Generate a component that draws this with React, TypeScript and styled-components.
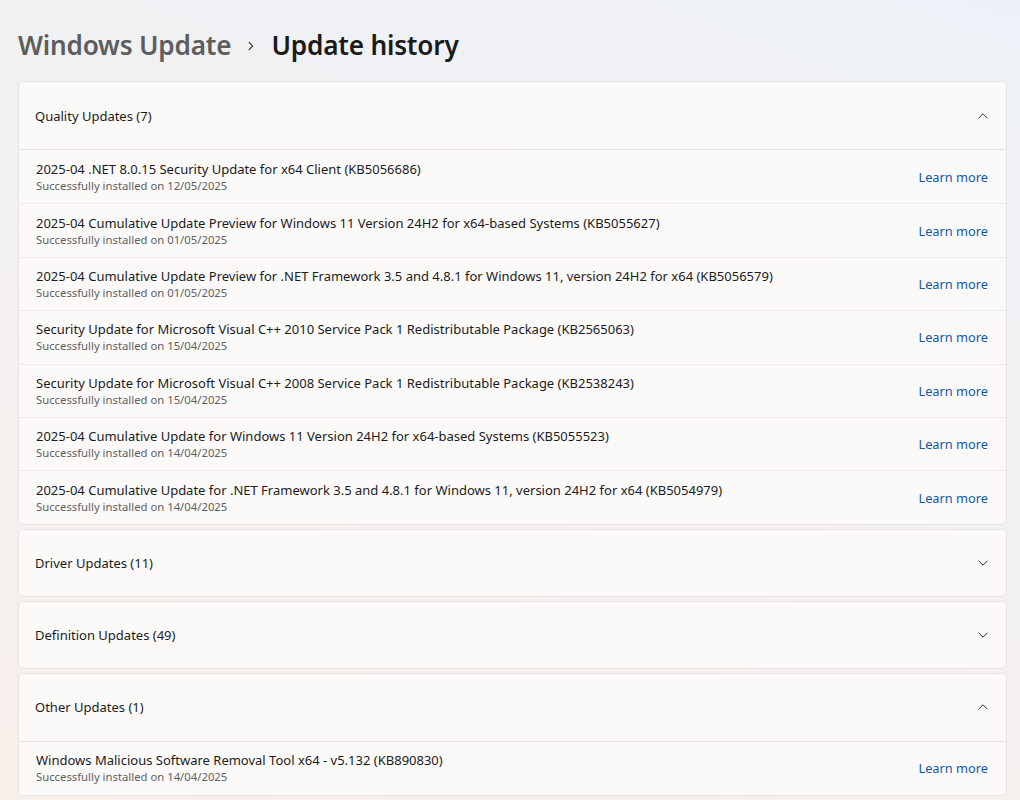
import styled, { createGlobalStyle } from 'styled-components';

interface UpdateItem {
  title: string;
  date: string;
}

interface UpdateGroup {
  name: string;
  count: number;
  open: boolean;
  items: UpdateItem[];
}

const groups: UpdateGroup[] = [
  {
    name: 'Quality Updates',
    count: 7,
    open: true,
    items: [
      { title: '2025-04 .NET 8.0.15 Security Update for x64 Client (KB5056686)', date: '12/05/2025' },
      { title: '2025-04 Cumulative Update Preview for Windows 11 Version 24H2 for x64-based Systems (KB5055627)', date: '01/05/2025' },
      { title: '2025-04 Cumulative Update Preview for .NET Framework 3.5 and 4.8.1 for Windows 11, version 24H2 for x64 (KB5056579)', date: '01/05/2025' },
      { title: 'Security Update for Microsoft Visual C++ 2010 Service Pack 1 Redistributable Package (KB2565063)', date: '15/04/2025' },
      { title: 'Security Update for Microsoft Visual C++ 2008 Service Pack 1 Redistributable Package (KB2538243)', date: '15/04/2025' },
      { title: '2025-04 Cumulative Update for Windows 11 Version 24H2 for x64-based Systems (KB5055523)', date: '14/04/2025' },
      { title: '2025-04 Cumulative Update for .NET Framework 3.5 and 4.8.1 for Windows 11, version 24H2 for x64 (KB5054979)', date: '14/04/2025' },
    ],
  },
  { name: 'Driver Updates', count: 11, open: false, items: [] },
  { name: 'Definition Updates', count: 49, open: false, items: [] },
  {
    name: 'Other Updates',
    count: 1,
    open: true,
    items: [
      { title: 'Windows Malicious Software Removal Tool x64 - v5.132 (KB890830)', date: '14/04/2025' },
    ],
  },
];

const GlobalStyle = createGlobalStyle`
  html, body {
    margin: 0;
    padding: 0;
  }
  body {
    font-family: "Noto Sans", "Open Sans", sans-serif;
    color: #1b1b1b;
    background: linear-gradient(200deg, #edf1f7 0%, #f2f1f1 45%, #f7efea 100%);
    min-height: 800px;
    overflow: hidden;
  }
`;

const Page = styled.div`
  padding: 27px 13px 0 18px;
  height: 800px;
  box-sizing: border-box;
`;

const Breadcrumb = styled.h1`
  margin: 0 0 17px 0;
  display: flex;
  align-items: center;
  gap: 15px;
  font-size: 26.2px;
  font-weight: 600;
  line-height: 37px;
  letter-spacing: -0.2px;
`;

const Crumb = styled.span<{ $current?: boolean }>`
  color: ${(p) => (p.$current ? '#1a1a1a' : '#5d5d5d')};
`;

const Separator = styled.span`
  display: flex;
  align-items: center;
`;

const Groups = styled.div`
  display: flex;
  flex-direction: column;
  gap: 4px;
`;

const Card = styled.section`
  background: rgba(252, 251, 250, 0.92);
  border: 1px solid #e6e3e1;
  border-radius: 5px;
  overflow: hidden;
`;

const Header = styled.div<{ $open: boolean }>`
  height: ${(p) => (p.$open ? '67px' : '66px')};
  display: flex;
  align-items: center;
  justify-content: space-between;
  padding: 0 17px 0 16px;
  font-size: 13px;
  border-bottom: ${(p) => (p.$open ? '1.5px solid #e4e1df' : 'none')};
`;

const List = styled.ul`
  list-style: none;
  margin: 0;
  padding: 0;
`;

const Row = styled.li`
  height: 53.4px;
  box-sizing: border-box;
  display: flex;
  align-items: center;
  justify-content: space-between;
  padding: 0 18px 0 17px;

  & + & {
    border-top: 1px solid #eeebe9;
  }
`;

const RowText = styled.div`
  display: flex;
  flex-direction: column;
`;

const RowTitle = styled.span`
  font-size: 13px;
  line-height: 18px;
  color: #1b1b1b;
`;

const RowDate = styled.span`
  font-size: 11.3px;
  line-height: 16px;
  color: #5f5f5f;
`;

const LearnMore = styled.a`
  font-size: 12.8px;
  color: #0f58a8;
  text-decoration: none;
  white-space: nowrap;
`;

const Chevron = ({ up }: { up: boolean }) => (
  <svg width="12" height="12" viewBox="0 0 12 12" fill="none">
    <path
      d={up ? 'M1.8 8 L6 3.8 L10.2 8' : 'M1.8 4 L6 8.2 L10.2 4'}
      stroke="#2b2b2b"
      strokeWidth="1"
      strokeLinecap="round"
      strokeLinejoin="round"
    />
  </svg>
);

const App = () => {
  return (
    <>
      <GlobalStyle />
      <Page>
        <Breadcrumb>
          <Crumb>Windows Update</Crumb>
          <Separator>
            <svg width="10" height="12" viewBox="0 0 10 12" fill="none">
              <path d="M3.2 2.5 L6.7 6 L3.2 9.5" stroke="#4a4a4a" strokeWidth="1.3" strokeLinecap="round" strokeLinejoin="round" />
            </svg>
          </Separator>
          <Crumb $current>Update history</Crumb>
        </Breadcrumb>
        <Groups>
          {groups.map((g) => (
            <Card key={g.name}>
              <Header $open={g.open}>
                <span>
                  {g.name} ({g.count})
                </span>
                <Chevron up={g.open} />
              </Header>
              {g.open && (
                <List>
                  {g.items.map((item) => (
                    <Row key={item.title}>
                      <RowText>
                        <RowTitle>{item.title}</RowTitle>
                        <RowDate>Successfully installed on {item.date}</RowDate>
                      </RowText>
                      <LearnMore href="#">Learn more</LearnMore>
                    </Row>
                  ))}
                </List>
              )}
            </Card>
          ))}
        </Groups>
      </Page>
    </>
  );
};

export default App;
